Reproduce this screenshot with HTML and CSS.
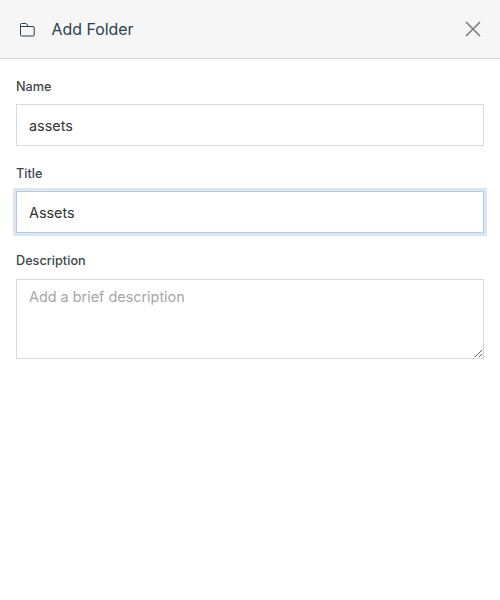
FILE: index.html
```html
<html>
  <head>
    <title>Add Folder</title>
    <link rel="stylesheet" href="styles.css">
  </head>

  <body>

    <div class='header'>
      <svg class='folder-icon' viewBox='0 0 16 16' width='16' height='16'>
        <path d='M1.5 5.5V3.4C1.5 2.8 1.9 2.5 2.5 2.5H6.8C7.1 2.5 7.3 2.6 7.5 2.8L9.5 5.5H14C14.7 5.5 15.2 5.9 15.2 6.6V14C15.2 14.6 14.8 15 14.2 15H2.5C1.9 15 1.5 14.6 1.5 14V5.5H9.5' />
      </svg>
      <div class='header-title'>Add Folder</div>
      <svg class='close-icon' viewBox='0 0 16 16' width='16' height='16'>
        <path d='M1 1L15 15M15 1L1 15' />
      </svg>
    </div>

    <form class='form'>
      <div class='field'>
        <label for='name'>Name</label>
        <input id='name' type='text' value='assets'>
      </div>
      <div class='field'>
        <label for='title'>Title</label>
        <input id='title' class='focused' type='text' value='Assets'>
      </div>
      <div class='field'>
        <label for='description'>Description</label>
        <textarea id='description' placeholder='Add a brief description'></textarea>
      </div>
    </form>

  </body>
</html>
```

FILE: styles.css
```css
body{
  margin: 0;
  background: #fff;
  font-family: Inter, "Liberation Sans", sans-serif;
  color: #343a40;
}

.header{
  height: 58px;
  display: flex;
  align-items: center;
  padding: 0 19px;
  background: #f6f6f6;
  border-bottom: 1px solid #d4d4d4;
}

.folder-icon{
  fill: none;
  stroke: #2c3e50;
  stroke-width: 1;
}

.header-title{
  margin-left: 16.5px;
  font-size: 15.9px;
  color: #2c3e50;
  flex: 1;
}

.close-icon{
  fill: none;
  stroke: #808080;
  stroke-width: 1.7;
}

.form{
  display: flex;
  flex-direction: column;
  gap: 18px;
  padding: 17.65px 16px 0;
}

.field{
  display: flex;
  flex-direction: column;
}

label{
  font-size: 12.7px;
  font-weight: 500;
  line-height: 19.8px;
  margin-bottom: 7.6px;
  color: #40464d;
}

input, textarea{
  box-sizing: border-box;
  width: 100%;
  margin: 0;
  padding: 0 12px;
  border: 1px solid #d9d9d9;
  border-radius: 0;
  outline: none;
  font-family: inherit;
  font-size: 14.4px;
  color: #333;
}

input{
  height: 42px;
}

textarea{
  display: block;
  height: 80px;
  padding-top: 8px;
  padding-bottom: 8px;
  line-height: 18px;
}

textarea::placeholder{
  color: #a6a6a6;
  opacity: 1;
}

.focused{
  border-color: #b3cbe6;
  box-shadow: 0 0 0 3px #dce6f2;
}
```
